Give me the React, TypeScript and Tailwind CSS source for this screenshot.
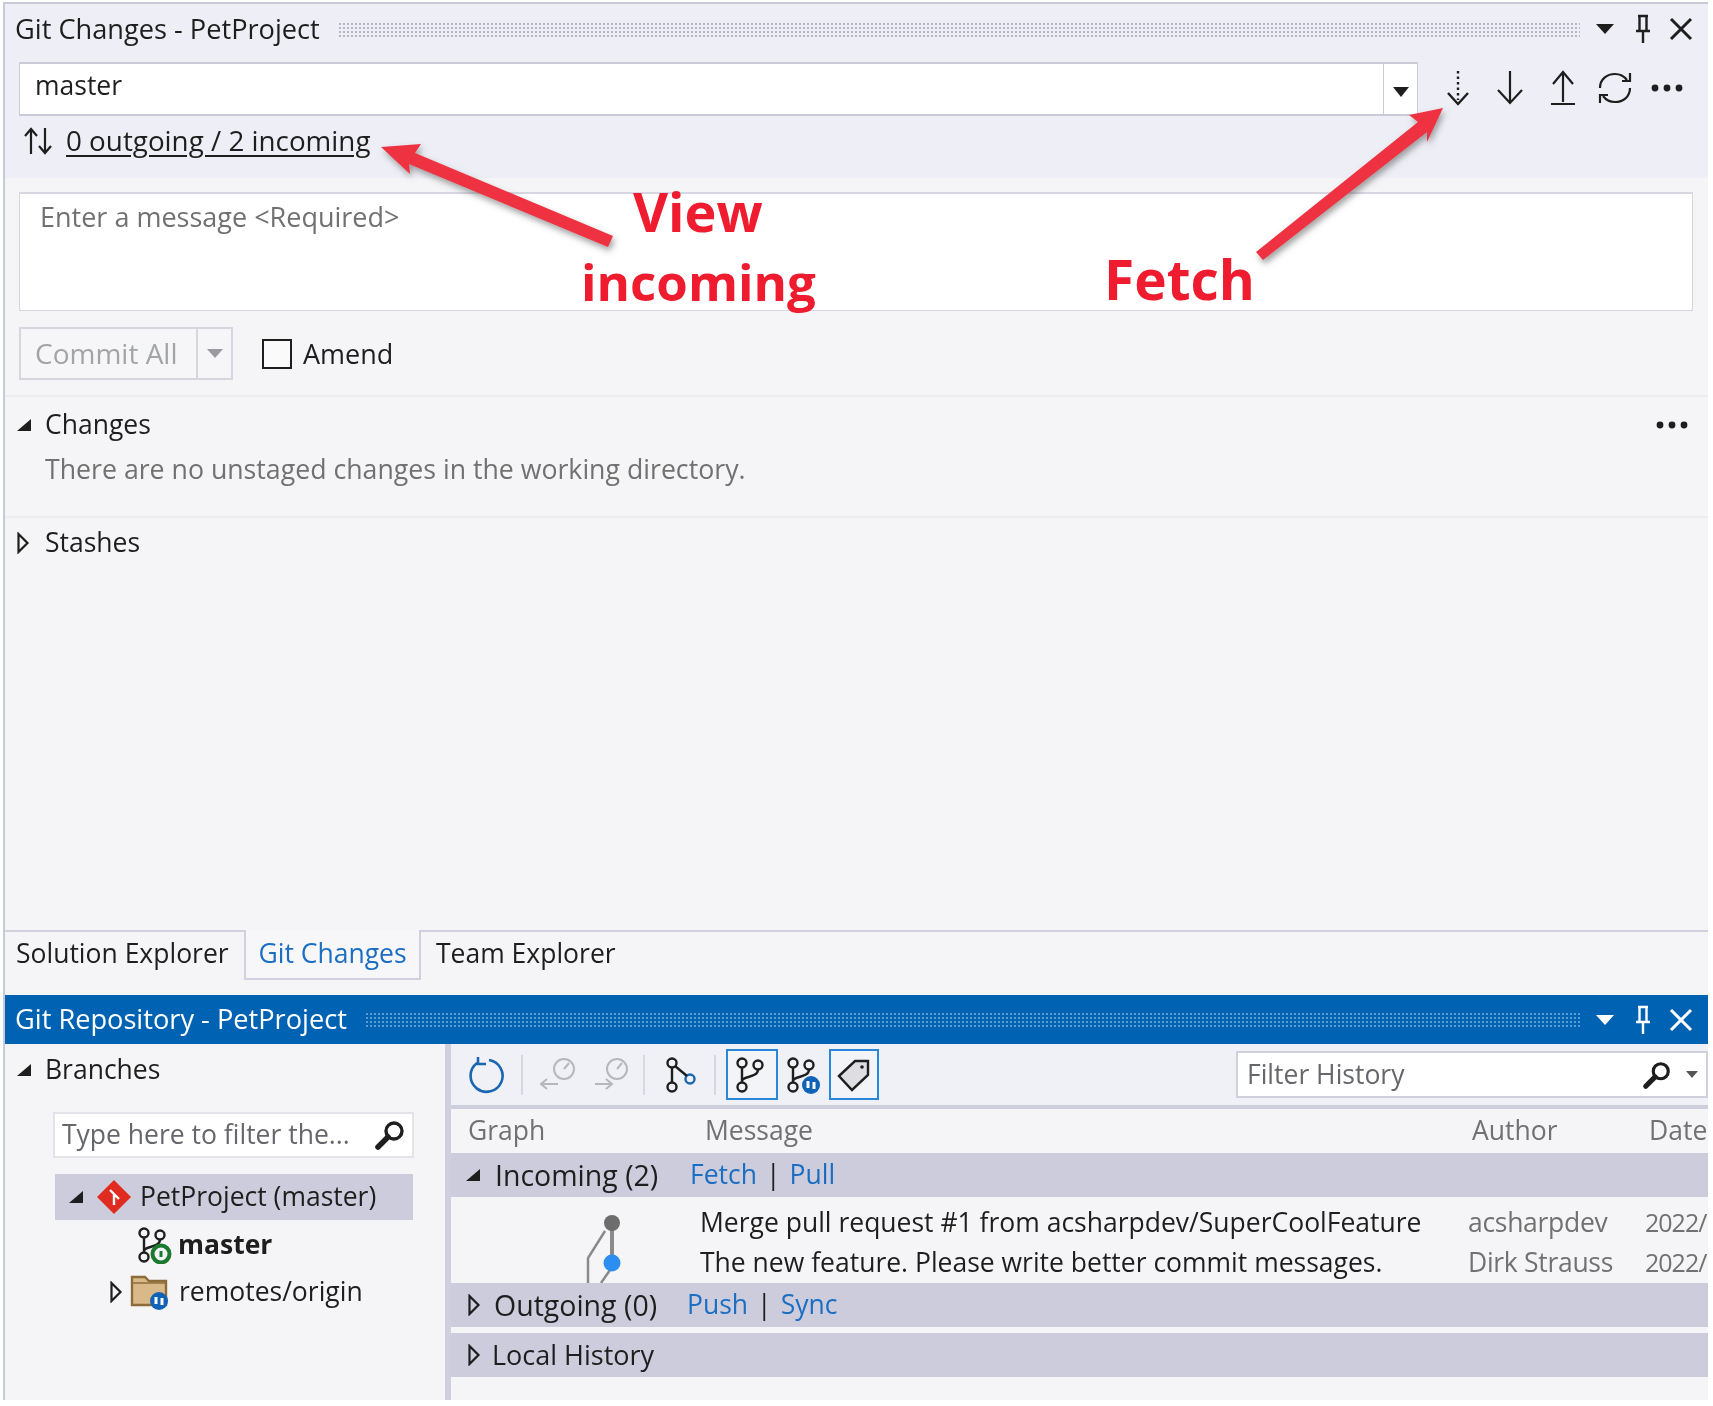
const font = { fontFamily: '"Open Sans", "Noto Sans", sans-serif' };

function TriOpen() {
  return (
    <svg width="16" height="16" viewBox="0 0 16 16" className="shrink-0">
      <path d="M15 2v12H1z" fill="#1e1e1e" />
    </svg>
  );
}

function TriClosed() {
  return (
    <svg width="14" height="22" viewBox="0 0 14 22" className="shrink-0">
      <path d="M2.5 2l9 9-9 9z" fill="none" stroke="#1e1e1e" strokeWidth="2.2" />
    </svg>
  );
}

function PaneButtons({ color }: { color: string }) {
  return (
    <div className="flex items-center ml-[15px] shrink-0">
      <svg width="20" height="12" viewBox="0 0 20 12">
        <path d="M1 1h18l-9 10z" fill={color} />
      </svg>
      <svg width="20" height="32" viewBox="0 0 20 32" className="ml-[18px]" fill="none" stroke={color} strokeWidth="2.4">
        <path d="M5 3h10M6.5 3v15M13.5 3v15M3 18h14M10 18v12" />
      </svg>
      <svg width="24" height="24" viewBox="0 0 24 24" className="ml-[16px]" fill="none" stroke={color} strokeWidth="3">
        <path d="M2 2l20 20M22 2L2 22" />
      </svg>
    </div>
  );
}

function FetchIcon() {
  return (
    <svg width="24" height="36" viewBox="0 0 24 36" fill="none" stroke="#1e1e1e" strokeWidth="2.4">
      <path d="M12 1v29" strokeDasharray="2.5 3" />
      <path d="M2 23l10 11 10-11" />
    </svg>
  );
}

function PullIcon() {
  return (
    <svg width="28" height="36" viewBox="0 0 28 36" fill="none" stroke="#1e1e1e" strokeWidth="2.2">
      <path d="M14 1v32M2 20l12 13 12-13" />
    </svg>
  );
}

function PushIcon() {
  return (
    <svg width="26" height="36" viewBox="0 0 26 36" fill="none" stroke="#1e1e1e" strokeWidth="2.2">
      <path d="M13 2v30M3 14L13 2l10 12M1 34h24" />
    </svg>
  );
}

function SyncIcon() {
  return (
    <svg width="36" height="36" viewBox="0 0 36 36" fill="none" stroke="#1e1e1e" strokeWidth="2.2">
      <path d="M3 18C3 9 10 4 18 4c5 0 9 2 12 6" />
      <path d="M33 3v8H25" />
      <path d="M33 18c0 9-7 14-15 14-5 0-9-2-12-6" />
      <path d="M3 33v-8h8" />
    </svg>
  );
}

function Dots({ className }: { className?: string }) {
  return (
    <svg width="32" height="10" viewBox="0 0 32 10" className={className} fill="#1e1e1e">
      <circle cx="4" cy="5" r="3.4" />
      <circle cx="16" cy="5" r="3.4" />
      <circle cx="28" cy="5" r="3.4" />
    </svg>
  );
}

function SearchGlass({ size = 32 }: { size?: number }) {
  return (
    <svg width={size} height={size} viewBox="0 0 32 32" fill="none" stroke="#1e1e1e">
      <circle cx="20" cy="12" r="8" strokeWidth="3.4" />
      <path d="M14 18L4 28" strokeWidth="5.5" strokeLinecap="round" />
    </svg>
  );
}

function BranchGlyph({ badge }: { badge?: "blue" | "green" }) {
  return (
    <svg width="36" height="38" viewBox="0 0 36 38" fill="none" stroke="#1e1e1e" strokeWidth="2.4" className="shrink-0">
      <circle cx="8" cy="7" r="4.5" />
      <circle cx="8" cy="31" r="4.5" />
      <circle cx="24" cy="9" r="4.5" />
      <path d="M8 11.5v15M8 25c0-5 16-3 16-11.5" />
      {badge === "blue" && (
        <>
          <circle cx="26" cy="29" r="9" fill="#0f62b5" stroke="none" />
          <path d="M23 25v7M29 26v7" stroke="#fff" strokeWidth="3" />
        </>
      )}
      {badge === "green" && (
        <>
          <circle cx="25" cy="28" r="8.5" fill="#f5f5f7" stroke="#1b7a2e" strokeWidth="4" />
          <path d="M25 25v6" stroke="#1b7a2e" strokeWidth="3" />
        </>
      )}
    </svg>
  );
}

function ToolbarSep({ className }: { className: string }) {
  return <div className={`w-[2px] h-[40px] bg-[#d6d7e0] shrink-0 ${className}`} />;
}

function ClockArrow({ flip }: { flip?: boolean }) {
  return (
    <svg width="38" height="36" viewBox="0 0 38 36" fill="none" stroke="#b6b7bd" strokeWidth="2" className="shrink-0">
      <circle cx="24" cy="12" r="10" />
      <path d="M24 12l5-6" />
      {flip ? <path d="M2 27h16M13 22l6 5-6 5" /> : <path d="M18 27H2M7 22l-6 5 6 5" />}
    </svg>
  );
}

function Band({ children }: { children: React.ReactNode }) {
  return <div className="h-[44px] bg-[#ccccdc] flex items-center text-[26.5px] text-[#1e1e1e]">{children}</div>;
}

export default function App() {
  return (
    <div className="relative w-[1713px] h-[1406px] bg-white overflow-hidden pt-[2px] pl-[3px] text-[#1e1e1e] blur-[0.4px]" style={font}>
      <div className="w-[1705px] h-[1398px] flex flex-col border-l-2 border-t-2 border-[#c8cad8] bg-[#f5f5f7]">
        {/* Git Changes pane */}
        <div className="h-[174px] bg-[#eeeff6] shrink-0">
          <div className="h-[50px] flex items-center pl-[10px] pr-[15px]">
            <span className="text-[27.2px] shrink-0">Git Changes - PetProject</span>
            <div className="flex-1 h-[15px] ml-[18px] bg-[radial-gradient(#b4b6c6_1px,transparent_1px)] bg-[length:4px_4px]" />
            <PaneButtons color="#1e1e1e" />
          </div>
          <div className="mt-[8px] h-[54px] flex items-center pl-[14px]">
            <div className="w-[1399px] h-[54px] bg-white border border-[#c9cbd8] border-t-2 border-b-2 flex shrink-0">
              <div className="flex-1 pl-[15px] text-[26.5px] leading-[42px]">master</div>
              <div className="w-[34px] border-l border-[#c9cbd8] flex items-center justify-center pt-[6px]">
                <svg width="18" height="10" viewBox="0 0 18 10">
                  <path d="M1 0h16l-8 10z" fill="#1e1e1e" />
                </svg>
              </div>
            </div>
            <div className="ml-[28px] -mt-[2px]"><FetchIcon /></div>
            <div className="ml-[26px] -mt-[2px]"><PullIcon /></div>
            <div className="ml-[26px] -mt-[2px]"><PushIcon /></div>
            <div className="ml-[21px] -mt-[2px]"><SyncIcon /></div>
            <Dots className="ml-[18px] -mt-[2px]" />
          </div>
          <div className="h-[54px] flex items-center pl-[18px] pb-[4px]">
            <svg width="30" height="30" viewBox="0 0 30 30" fill="none" stroke="#1e1e1e" strokeWidth="2.2" className="shrink-0">
              <path d="M8 28V3M2 10l6-7 6 7M22 2v25M16 20l6 7 6-7" />
            </svg>
            <span className="ml-[13px] text-[27.8px] underline underline-offset-4">0 outgoing / 2 incoming</span>
          </div>
        </div>

        <div className="ml-[14px] mt-[14px] w-[1674px] h-[119px] bg-white border border-[#d6d7e2] border-t-2 pl-[20px] pt-[3px] text-[27px] text-[#717171] shrink-0">
          Enter a message &lt;Required&gt;
        </div>

        <div className="mt-[16px] pl-[14px] flex items-center h-[53px] shrink-0">
          <div className="w-[214px] h-[53px] border-2 border-[#d5d6de] flex bg-[#f6f6f8]">
            <div className="w-[175px] pl-[14px] text-[28px] leading-[49px] text-[#a2a4a5] whitespace-nowrap">Commit All</div>
            <div className="flex-1 border-l-2 border-[#d5d6de] flex items-center justify-center">
              <svg width="16" height="9" viewBox="0 0 16 9"><path d="M0 0h16L8 9z" fill="#9a9ba0" /></svg>
            </div>
          </div>
          <div className="ml-[29px] w-[30px] h-[30px] border-2 border-[#1e1e1e] bg-[#fafafa]" />
          <span className="ml-[11px] text-[27px] pt-[1px]">Amend</span>
        </div>

        <div className="mt-[15px] h-[123px] border-t-2 border-b-2 border-[#ebebf0] shrink-0">
          <div className="h-[55px] flex items-center pl-[11px] pr-[20px]">
            <TriOpen />
            <span className="ml-[13px] text-[26.5px]">Changes</span>
            <Dots className="ml-auto" />
          </div>
          <div className="pl-[40px] pt-[2px] text-[26.7px] text-[#717171] leading-[30px]">There are no unstaged changes in the working directory.</div>
        </div>

        <div className="h-[50px] flex items-center pl-[11px] shrink-0">
          <TriClosed />
          <span className="ml-[15px] text-[26.5px]">Stashes</span>
        </div>

        <div className="h-[362px] shrink-0" />

        {/* tab strip */}
        <div className="h-[65px] border-t-2 border-[#d0d1dd] flex items-start shrink-0">
          <div className="w-[239px] pl-[11px] h-[44px] flex items-center text-[26.5px]">Solution Explorer</div>
          <div className="w-[177px] h-[50px] border-x-2 border-b-2 border-[#d0d1dd] -mt-[2px] pb-[4px] pt-[3px] bg-[#f7f7f9] flex items-center justify-center text-[26.5px] text-[#1b6ec2]">Git Changes</div>
          <div className="pl-[15px] h-[44px] flex items-center text-[26.5px]">Team Explorer</div>
        </div>

        {/* Git Repository pane */}
        <div className="h-[49px] bg-[#0062b3] flex items-center pl-[10px] pr-[15px] text-white shrink-0">
          <span className="text-[27.2px] shrink-0">Git Repository - PetProject</span>
          <div className="flex-1 h-[15px] ml-[18px] bg-[radial-gradient(#5a9bd0_1px,transparent_1px)] bg-[length:4px_4px]" />
          <PaneButtons color="#ffffff" />
        </div>

        <div className="flex-1 flex min-h-0">
          <div className="w-[440px] shrink-0">
            <div className="h-[52px] flex items-center pl-[11px]">
              <TriOpen />
              <span className="ml-[13px] text-[26.5px]">Branches</span>
            </div>
            <div className="ml-[48px] mt-[16px] w-[361px] h-[46px] bg-white border-2 border-[#e3e4ea] flex items-center pl-[7px] pr-[6px]">
              <span className="text-[26.5px] text-[#66676c] whitespace-nowrap">Type here to filter the...</span>
              <div className="ml-auto"><SearchGlass /></div>
            </div>
            <div className="ml-[50px] mt-[16px] w-[358px] h-[46px] bg-[#ccccdc] flex items-center pl-[13px]">
              <TriOpen />
              <svg width="34" height="34" viewBox="0 0 34 34" className="ml-[13px] shrink-0">
                <path d="M17 0l17 17-17 17L0 17z" fill="#e02b20" />
                <path d="M13 10l9 9M17 15v10" stroke="#fff" strokeWidth="2.4" />
              </svg>
              <span className="ml-[9px] text-[26.5px]">PetProject (master)</span>
            </div>
            <div className="h-[47px] flex items-center pl-[131px] pt-[2px]">
              <BranchGlyph badge="green" />
              <span className="ml-[6px] font-bold text-[26.5px]">master</span>
            </div>
            <div className="h-[47px] flex items-center pl-[104px] pt-[2px]">
              <TriClosed />
              <svg width="40" height="38" viewBox="0 0 40 38" className="ml-[7px] shrink-0">
                <path d="M2 4h13l4 4h17v24H2z" fill="#d9b98a" stroke="#8e6c3a" strokeWidth="2.4" />
                <path d="M3 10h32" stroke="#8e6c3a" strokeWidth="1.5" />
                <circle cx="29" cy="28" r="9" fill="#0f62b5" />
                <path d="M26 24v7M32 25v7" stroke="#fff" strokeWidth="3" />
              </svg>
              <span className="ml-[9px] text-[26.5px]">remotes/origin</span>
            </div>
          </div>

          <div className="w-[6px] bg-[#cfcfde] shrink-0" />

          <div className="flex-1 min-w-0 overflow-hidden">
            <div className="h-[61px] bg-[#f0f1f7] flex items-center">
              <svg width="38" height="38" viewBox="0 0 38 38" fill="none" stroke="#1a66b0" strokeWidth="2.6" className="ml-[18px] shrink-0">
                <path d="M8 7a16 16 0 1 0 12-3M9 1v7h8" />
              </svg>
              <ToolbarSep className="ml-[14px]" />
              <div className="ml-[17px]"><ClockArrow /></div>
              <div className="ml-[15px]"><ClockArrow flip /></div>
              <ToolbarSep className="ml-[12px]" />
              <svg width="34" height="36" viewBox="0 0 34 36" fill="none" stroke="#1e1e1e" strokeWidth="2.4" className="ml-[18px] shrink-0">
                <circle cx="9" cy="6" r="4.5" />
                <circle cx="9" cy="30" r="4.5" />
                <path d="M9 10.5v15" />
                <circle cx="27" cy="22" r="4.5" stroke="#1a66b0" />
                <path d="M12 9l12 10" />
              </svg>
              <ToolbarSep className="ml-[17px]" />
              <div className="ml-[10px] w-[52px] h-[51px] border-2 border-[#2a86d8] bg-[#f3f4f8] flex items-center justify-center shrink-0">
                <BranchGlyph />
              </div>
              <div className="ml-[7px] shrink-0"><BranchGlyph badge="blue" /></div>
              <div className="ml-[8px] w-[50px] h-[51px] border-2 border-[#2a86d8] bg-[#f3f4f8] flex items-center justify-center shrink-0">
                <svg width="34" height="34" viewBox="0 0 34 34">
                  <path d="M2 18L18 3h13v14L15 32z" fill="#dedee2" stroke="#1e1e1e" strokeWidth="2.4" />
                  <circle cx="25" cy="9" r="1.8" fill="#1e1e1e" />
                </svg>
              </div>
              <div className="ml-auto w-[472px] h-[47px] bg-white border-2 border-[#d0d1dd] flex items-center pl-[9px] pr-[8px] shrink-0">
                <span className="text-[26.5px] text-[#66676c]">Filter History</span>
                <div className="ml-auto"><SearchGlass size={30} /></div>
                <svg width="12" height="7" viewBox="0 0 12 7" className="ml-[14px]"><path d="M0 0h12L6 7z" fill="#555" /></svg>
              </div>
            </div>
            <div className="h-[4px] bg-[#cdcede]" />
            <div className="h-[44px] flex items-center text-[26.5px] text-[#717171]">
              <span className="ml-[17px] w-[237px]">Graph</span>
              <span className="w-[767px]">Message</span>
              <span className="w-[177px]">Author</span>
              <span className="whitespace-nowrap">Date</span>
            </div>
            <Band>
              <div className="ml-[14px]"><TriOpen /></div>
              <span className="ml-[14px] w-[195px] shrink-0 text-[28.5px]">Incoming (2)</span>
              <span className="text-[#1b6ec2]">Fetch</span>
              <span className="mx-[9px]">|</span>
              <span className="text-[#1b6ec2]">Pull</span>
            </Band>
            <div className="h-[86px] flex text-[26.5px]">
              <svg width="249" height="86" viewBox="0 0 249 86" className="shrink-0">
                <path d="M161 26v40" stroke="#8a8a8a" strokeWidth="4" fill="none" />
                <path d="M154 34l-17 27v25M159 73l-9 13" stroke="#8a8a8a" strokeWidth="2.5" fill="none" />
                <circle cx="161" cy="26" r="8" fill="#6d6d6d" />
                <circle cx="161" cy="66" r="8.5" fill="#2b8ef0" />
              </svg>
              <div className="w-[768px] shrink-0 whitespace-nowrap pt-[5px] leading-[40px]">
                <div>Merge pull request #1 from acsharpdev/SuperCoolFeature</div>
                <div>The new feature. Please write better commit messages.</div>
              </div>
              <div className="w-[177px] shrink-0 whitespace-nowrap pt-[5px] leading-[40px] text-[#717171] tracking-[-0.3px]">
                <div>acsharpdev</div>
                <div>Dirk Strauss</div>
              </div>
              <div className="whitespace-nowrap pt-[5px] leading-[40px] text-[#717171] text-[25px] tracking-[-1px]">
                <div>2022/</div>
                <div>2022/</div>
              </div>
            </div>
            <Band>
              <div className="ml-[16px]"><TriClosed /></div>
              <span className="ml-[13px] w-[193px] shrink-0 text-[28.5px]">Outgoing (0)</span>
              <span className="text-[#1b6ec2]">Push</span>
              <span className="mx-[9px]">|</span>
              <span className="text-[#1b6ec2]">Sync</span>
            </Band>
            <div className="h-[6px]" />
            <Band>
              <div className="ml-[16px]"><TriClosed /></div>
              <span className="ml-[11px] text-[27px]">Local History</span>
            </Band>
          </div>
        </div>
      </div>

      {/* red annotations over the screenshot */}
      <svg width="1713" height="1406" viewBox="0 0 1713 1406" className="absolute left-0 top-0 pointer-events-none">
        <defs>
          <filter id="arrowShadow" x="-20%" y="-20%" width="140%" height="140%">
            <feDropShadow dx="2" dy="4" stdDeviation="3" floodColor="#555" floodOpacity="0.55" />
          </filter>
        </defs>
        <g filter="url(#arrowShadow)" fill="#ee3342">
          <path d="M381 147l40-3-6 9 198 83-5 11-199-83 1 10z" />
          <path d="M1443 108l-34 7 9 7-162 130 7 8 164-128 0 10z" />
        </g>
      </svg>
      <div className="absolute left-[633px] top-[178px] text-[54px] leading-[66px] font-bold text-[#ee1c2e] pointer-events-none">View</div>
      <div className="absolute left-[581px] top-[248px] text-[51px] leading-[66px] font-bold text-[#ee1c2e] pointer-events-none">incoming</div>
      <div className="absolute left-[1104px] top-[246px] text-[55px] leading-[66px] font-bold text-[#ee1c2e] pointer-events-none">Fetch</div>
    </div>
  );
}
